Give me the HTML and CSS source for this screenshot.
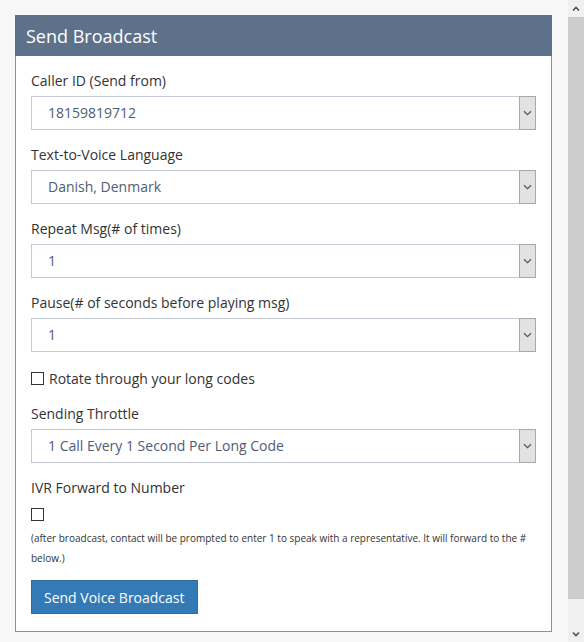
FILE: index.html
```html
<!DOCTYPE html>
<html>
<head>
<meta charset="utf-8">
<link rel="stylesheet" href="styles.css">
</head>
<body>
<div class="page">
  <div class="panel">
    <div class="panel-head">Send Broadcast</div>
    <div class="panel-body">
      <div class="group">
        <div class="label">Caller ID (Send from)</div>
        <div class="select"><span class="val pad">18159819712</span><span class="arrow"><svg width="9" height="6" viewBox="0 0 9 6"><path d="M1 1.2 L4.5 4.6 L8 1.2" fill="none" stroke="#555" stroke-width="1.2"/></svg></span></div>
      </div>
      <div class="group">
        <div class="label">Text-to-Voice Language</div>
        <div class="select"><span class="val pad">Danish, Denmark</span><span class="arrow"><svg width="9" height="6" viewBox="0 0 9 6"><path d="M1 1.2 L4.5 4.6 L8 1.2" fill="none" stroke="#555" stroke-width="1.2"/></svg></span></div>
      </div>
      <div class="group">
        <div class="label">Repeat Msg(# of times)</div>
        <div class="select"><span class="val pad">1</span><span class="arrow"><svg width="9" height="6" viewBox="0 0 9 6"><path d="M1 1.2 L4.5 4.6 L8 1.2" fill="none" stroke="#555" stroke-width="1.2"/></svg></span></div>
      </div>
      <div class="group">
        <div class="label">Pause(# of seconds before playing msg)</div>
        <div class="select"><span class="val pad">1</span><span class="arrow"><svg width="9" height="6" viewBox="0 0 9 6"><path d="M1 1.2 L4.5 4.6 L8 1.2" fill="none" stroke="#555" stroke-width="1.2"/></svg></span></div>
      </div>
      <div class="check-row"><span class="box"></span><span class="check-text">Rotate through your long codes</span></div>
      <div class="group">
        <div class="label">Sending Throttle</div>
        <div class="select"><span class="val pad">1 Call Every 1 Second Per Long Code</span><span class="arrow"><svg width="9" height="6" viewBox="0 0 9 6"><path d="M1 1.2 L4.5 4.6 L8 1.2" fill="none" stroke="#555" stroke-width="1.2"/></svg></span></div>
      </div>
      <div class="ivr">
        <div class="label">IVR Forward to Number</div>
        <div class="check-row solo"><span class="box"></span></div>
        <div class="note">(after broadcast, contact will be prompted to enter 1 to speak with a representative. It will forward to the # below.)</div>
      </div>
      <button class="btn">Send Voice Broadcast</button>
    </div>
  </div>
</div>
<div class="scrollbar">
  <div class="sb-btn"><svg width="8" height="6" viewBox="0 0 8 6"><path d="M1 4.5 L4 1.5 L7 4.5" fill="none" stroke="#505050" stroke-width="1.6"/></svg></div>
  <div class="sb-thumb"></div>
  <div class="sb-rest"></div>
  <div class="sb-btn"><svg width="8" height="6" viewBox="0 0 8 6"><path d="M1 1.5 L4 4.5 L7 1.5" fill="none" stroke="#505050" stroke-width="1.6"/></svg></div>
</div>
</body>
</html>
```
FILE: styles.css
```css
html, body {
  margin: 0;
  padding: 0;
  height: 642px;
  overflow: hidden;
  background: #f8f8f8;
  font-family: "Open Sans", "Liberation Sans", sans-serif;
}
.page {
  margin-right: 16px;
  padding: 15px 16px 0 15px;
}
.panel {
  border: 1px solid #8593a5;
  background: #fff;
}
.panel-head {
  background: #5e718a;
  color: #fff;
  font-size: 18px;
  height: 40px;
  line-height: 40px;
  padding-left: 10px;
  margin: -1px -1px 0 -1px;
  border: 1px solid #5e718a;
  border-bottom: none;
}
.panel-body {
  padding: 15px 15px 17px 15px;
}
.group {
  display: flex;
  flex-direction: column;
  gap: 5px;
  margin-bottom: 15px;
}
.label {
  font-size: 14px;
  line-height: 20px;
  color: #333;
}
.select {
  height: 32px;
  border: 1px solid #c3cad5;
  display: flex;
  align-items: stretch;
}
.val {
  flex: 1;
  font-size: 14px;
  line-height: 32px;
  color: #4f5d74;
}
.pad {
  padding-left: 16px;
}
.arrow {
  width: 15px;
  background: #e2e2e2;
  border: 1px solid #a9a9a9;
  margin: -1px -1px -1px 0;
  display: flex;
  align-items: center;
  justify-content: center;
}
.check-row {
  display: flex;
  align-items: center;
  gap: 5px;
  height: 20px;
  margin: 16px 0 16px 0;
}
.check-row.solo {
  margin: 6px 0 4px 0;
}
.box {
  width: 11px;
  height: 11px;
  border: 1px solid #333;
  background: #fff;
}
.check-text {
  font-size: 14px;
  color: #333;
}
.ivr {
  display: flex;
  flex-direction: column;
}
.note {
  font-size: 10px;
  line-height: 20px;
  color: #333;
}
.btn {
  display: block;
  margin-top: 12px;
  height: 34px;
  padding: 0 12px;
  background: #337ab7;
  border: 1px solid #2e6da4;
  color: #fff;
  font-family: "Open Sans", "Liberation Sans", sans-serif;
  font-size: 14px;
}
.scrollbar {
  position: fixed;
  top: 0;
  right: 0;
  width: 16px;
  height: 642px;
  background: #f0f0f0;
  display: flex;
  flex-direction: column;
}
.sb-btn {
  height: 17px;
  display: flex;
  align-items: center;
  justify-content: center;
}
.sb-thumb {
  height: 582px;
  background: #cdcdcd;
}
.sb-rest {
  flex: 1;
}
```
